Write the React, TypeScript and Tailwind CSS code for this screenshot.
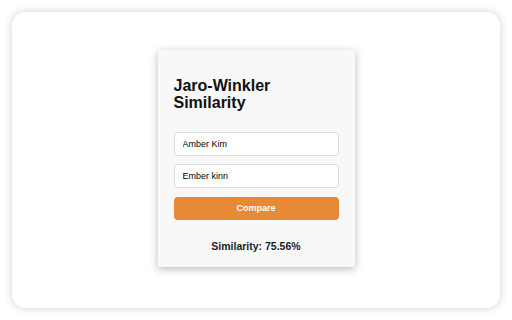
import React from "react";

export default function App() {
  return (
    <div className="w-[512px] h-[320px] bg-white p-[12px]" style={{ fontFamily: '"Liberation Sans", Arial, sans-serif' }}>
      <div className="w-full h-full bg-white rounded-[14px] shadow-[0_0_10px_rgba(0,0,0,0.18)] flex items-center justify-center">
        <div className="w-[197px] bg-[#f8f8f8] px-4 pt-4 pb-[15px] shadow-[0_2px_8px_rgba(0,0,0,0.28)] -mt-[3px]">
          <h2 className="mt-[11px] mb-[21px] text-[16px] leading-[17px] font-bold text-[#111]">
            Jaro-Winkler
            <br />
            Similarity
          </h2>
          <input
            readOnly
            value="Amber Kim"
            className="block w-full h-[24px] bg-white border border-[#dcdcdc] rounded-[4px] px-2 text-[9px] text-[#000] outline-none"
          />
          <input
            readOnly
            value="Ember kinn"
            className="block w-full h-[24px] mt-2 bg-white border border-[#dcdcdc] rounded-[4px] px-2 text-[9px] text-[#000] outline-none"
          />
          <button className="block w-full h-[23px] mt-[9px] bg-[#e68a35] rounded-[4px] text-white font-bold text-[9px] leading-[23px]">
            Compare
          </button>
          <div className="mt-[20px] h-[12px] leading-[12px] text-center font-bold text-[10.5px] text-[#222]">
            Similarity: 75.56%
          </div>
        </div>
      </div>
    </div>
  );
}
